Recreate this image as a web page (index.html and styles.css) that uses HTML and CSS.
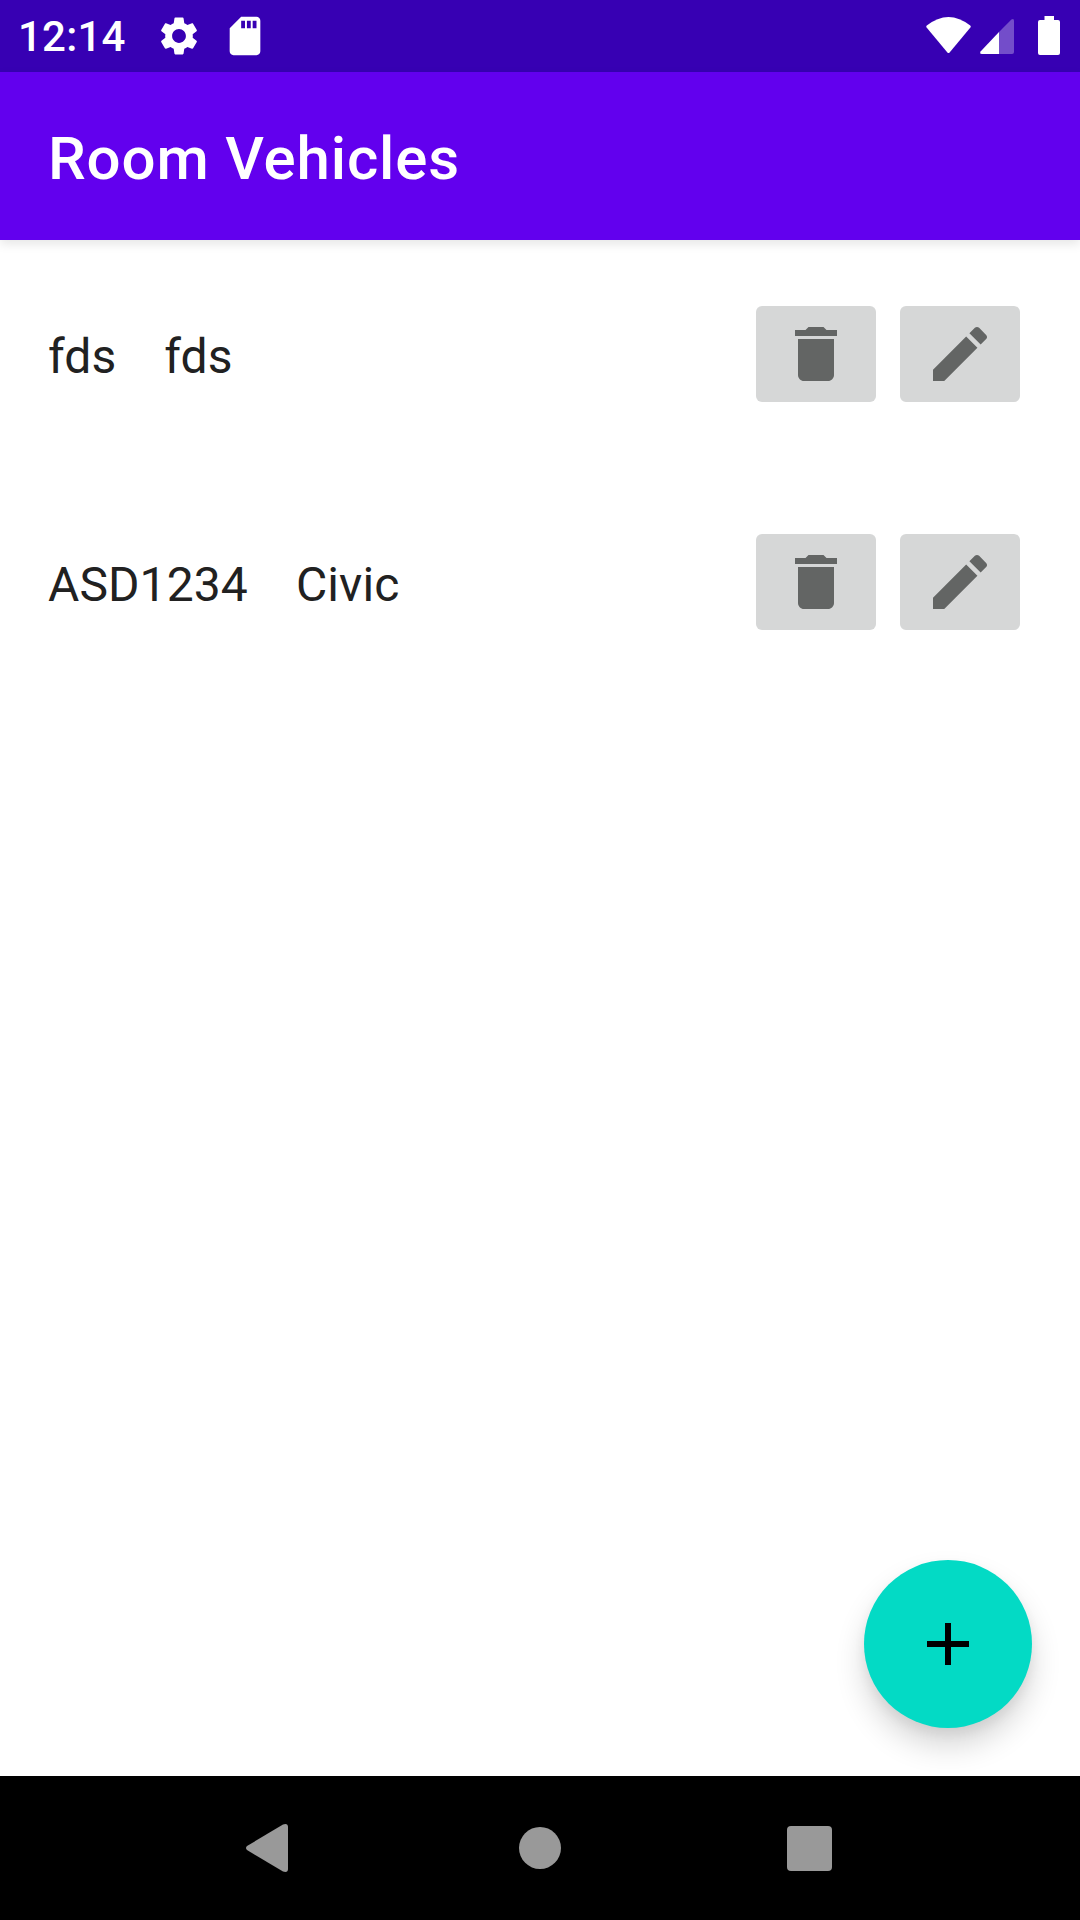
FILE: index.html
```html
<!DOCTYPE html>
<html lang="en">
<head>
    <meta charset="UTF-8">
    <meta name="viewport" content="width=device-width, initial-scale=1.0">
    <title>Room Vehicles</title>
    <link rel="stylesheet" href="styles.css">
</head>
<body>
    <div class="screen">
        <!-- Status bar -->
        <div class="status-bar">
            <span class="clock">12:14</span>
            <svg class="status-gear" viewBox="0 0 24 24"><path d="M19.14 12.94c.04-.3.06-.61.06-.94 0-.32-.02-.64-.07-.94l2.03-1.58c.18-.14.23-.41.12-.61l-1.92-3.32c-.12-.22-.37-.29-.59-.22l-2.39.96c-.5-.38-1.03-.7-1.62-.94l-.36-2.54c-.04-.24-.24-.41-.48-.41h-3.84c-.24 0-.43.17-.47.41l-.36 2.54c-.59.24-1.13.57-1.62.94l-2.39-.96c-.22-.08-.47 0-.59.22L2.74 8.87c-.12.21-.08.47.12.61l2.03 1.58c-.05.3-.09.63-.09.94s.02.64.07.94l-2.03 1.58c-.18.14-.23.41-.12.61l1.92 3.32c.12.22.37.29.59.22l2.39-.96c.5.38 1.03.7 1.62.94l.36 2.54c.05.24.24.41.48.41h3.84c.24 0 .44-.17.47-.41l.36-2.54c.59-.24 1.13-.56 1.62-.94l2.39.96c.22.08.47 0 .59-.22l1.92-3.32c.12-.22.07-.47-.12-.61l-2.01-1.58zM12 15.6c-1.98 0-3.6-1.62-3.6-3.6s1.62-3.6 3.6-3.6 3.6 1.62 3.6 3.6-1.62 3.6-3.6 3.6z"/></svg>
            <svg class="status-sd" viewBox="0 0 24 24"><path d="M18 2h-8L4.02 8 4 20c0 1.1.9 2 2 2h12c1.1 0 2-.9 2-2V4c0-1.1-.9-2-2-2zm-6 6h-2V4h2v4zm3 0h-2V4h2v4zm3 0h-2V4h2v4z"/></svg>
            <div class="status-right">
                <svg class="status-wifi" width="45" height="36" viewBox="0 0 45 36"><path d="M0.8 8.6Q22.5 -8.5 44.2 8.6Q45.2 9.6 44.4 10.6L23.6 35.4Q22.5 36.4 21.4 35.4L0.6 10.6Q-0.2 9.6 0.8 8.6Z"/></svg>
                <svg class="status-signal" width="34" height="35" viewBox="0 0 34 35"><path class="signal-off" d="M19 13L31.4 0.6Q34 -1 34 2V33Q34 35 32 35H19Z"/><path d="M19 13V35H2Q-1 35 0.8 32.2Z"/></svg>
                <svg class="status-battery" width="22" height="39" viewBox="0 0 22 39"><path d="M6.5 0H16V4H20Q22 4 22 6V37Q22 39 20 39H2Q0 39 0 37V6Q0 4 2 4H6.5Z"/></svg>
            </div>
        </div>

        <header class="app-bar">
            <h1>Room Vehicles</h1>
        </header>

        <main class="vehicle-list">
            <div class="vehicle-row">
                <span class="plate">fds</span>
                <span class="model">fds</span>
                <div class="row-actions">
                    <button class="icon-btn"><svg viewBox="0 0 24 24"><path d="M6 19c0 1.1.9 2 2 2h8c1.1 0 2-.9 2-2V7H6v12zM19 4h-3.5l-1-1h-5l-1 1H5v2h14V4z"/></svg></button>
                    <button class="icon-btn"><svg viewBox="0 0 24 24"><path d="M3 17.25V21h3.75L17.81 9.94l-3.75-3.75L3 17.25zM20.71 7.04c.39-.39.39-1.02 0-1.41l-2.34-2.34c-.39-.39-1.02-.39-1.41 0l-1.83 1.83 3.75 3.75 1.83-1.83z"/></svg></button>
                </div>
            </div>
            <div class="vehicle-row">
                <span class="plate">ASD1234</span>
                <span class="model">Civic</span>
                <div class="row-actions">
                    <button class="icon-btn"><svg viewBox="0 0 24 24"><path d="M6 19c0 1.1.9 2 2 2h8c1.1 0 2-.9 2-2V7H6v12zM19 4h-3.5l-1-1h-5l-1 1H5v2h14V4z"/></svg></button>
                    <button class="icon-btn"><svg viewBox="0 0 24 24"><path d="M3 17.25V21h3.75L17.81 9.94l-3.75-3.75L3 17.25zM20.71 7.04c.39-.39.39-1.02 0-1.41l-2.34-2.34c-.39-.39-1.02-.39-1.41 0l-1.83 1.83 3.75 3.75 1.83-1.83z"/></svg></button>
                </div>
            </div>
        </main>

        <button class="fab"><svg viewBox="0 0 42 42"><path d="M18 0h6v18h18v6H24v18h-6V24H0v-6h18z"/></svg></button>

        <!-- Navigation bar -->
        <nav class="nav-bar">
            <svg class="nav-back" width="42" height="48" viewBox="0 0 42 48"><path d="M1 26Q-1 24 1 22L37 0.5Q42 -1 42 3V45Q42 49 37 47.5Z"/></svg>
            <div class="nav-home"></div>
            <div class="nav-recent"></div>
        </nav>
    </div>
</body>
</html>
```

FILE: styles.css
```css
* {
    box-sizing: border-box;
}

body {
    margin: 0;
    font-family: Roboto, sans-serif;
    background-color: #fff;
}

.screen {
    position: relative;
    display: flex;
    flex-direction: column;
    width: 1080px;
    height: 1920px;
    overflow: hidden;
}

.status-bar {
    display: flex;
    align-items: center;
    height: 72px;
    padding-left: 18px;
    background-color: #3700b3;
    color: #fff;
    fill: #fff;
}

.clock {
    width: 104px;
    font-size: 42px;
    font-weight: 500;
    letter-spacing: 0.2px;
}

.status-gear {
    width: 46px;
    height: 46px;
    margin-left: 34px;
}

.status-sd {
    width: 46px;
    height: 46px;
    margin-left: 20px;
}

.status-right {
    display: flex;
    align-items: flex-start;
    align-self: stretch;
    margin-left: auto;
    margin-right: 20px;
}

.status-wifi {
    margin-top: 17px;
    margin-right: 9px;
}

.status-signal {
    margin-top: 19px;
    margin-right: 24px;
}

.status-battery {
    margin-top: 16px;
}

.signal-off {
    opacity: 0.3;
}

.app-bar {
    position: relative;
    display: flex;
    align-items: center;
    height: 168px;
    padding-left: 48px;
    background-color: #6200ee;
    box-shadow: 0 4px 10px rgba(0, 0, 0, 0.1);
}

.app-bar h1 {
    margin: 0;
    padding-top: 4px;
    font-size: 60px;
    font-weight: 500;
    letter-spacing: 0.85px;
    color: #fff;
}

.vehicle-list {
    flex: 1;
    display: flex;
    flex-direction: column;
    gap: 132px;
    padding: 66px 60px 0 48px;
}

.vehicle-row {
    display: flex;
    align-items: center;
    height: 96px;
    font-size: 48px;
    letter-spacing: 0.1px;
    color: #212121;
}

.plate,
.model {
    padding-top: 5px;
}

.plate {
    margin-right: 48px;
}

.row-actions {
    display: flex;
    gap: 24px;
    margin-left: auto;
}

.icon-btn {
    display: flex;
    align-items: center;
    justify-content: center;
    width: 120px;
    height: 96px;
    padding: 0;
    border: none;
    border-radius: 6px;
    background-color: #d6d7d7;
    fill: #636564;
}

.icon-btn svg {
    width: 72px;
    height: 72px;
}

.fab {
    position: absolute;
    left: 864px;
    top: 1560px;
    display: flex;
    align-items: center;
    justify-content: center;
    width: 168px;
    height: 168px;
    padding: 0;
    border: none;
    border-radius: 50%;
    background-color: #03dac5;
    box-shadow: 0 18px 30px rgba(0, 0, 0, 0.16), 0 6px 12px rgba(0, 0, 0, 0.06);
}

.fab svg {
    width: 42px;
    height: 42px;
}

.nav-bar {
    position: relative;
    display: flex;
    align-items: center;
    height: 144px;
    padding-left: 246px;
    background-color: #000;
}

.nav-back {
    fill: #999;
}

.nav-home {
    width: 42px;
    height: 42px;
    margin-left: 231px;
    border-radius: 50%;
    background-color: #999;
}

.nav-recent {
    width: 45px;
    height: 45px;
    margin-left: 226px;
    border-radius: 4px;
    background-color: #999;
}
```
